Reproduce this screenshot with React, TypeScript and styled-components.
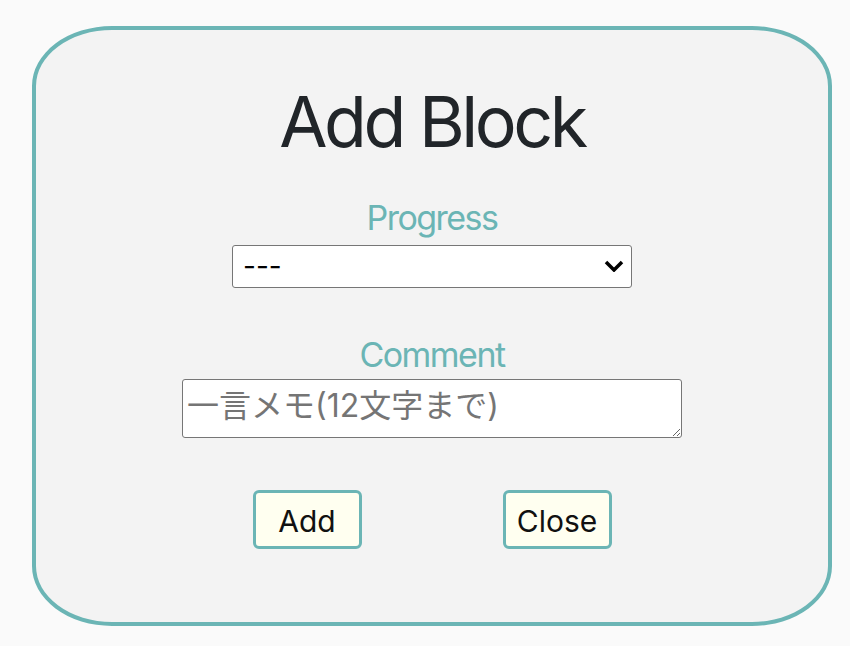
import React from "react";
import styled, { createGlobalStyle } from "styled-components";

const GlobalStyle = createGlobalStyle`
  body {
    margin: 0;
    background: #fafafa;
    font-family: Inter, "Noto Sans CJK JP", sans-serif;
  }
`;

const Modal = styled.div`
  box-sizing: border-box;
  width: 800px;
  height: 600px;
  margin: 26px 0 0 32px;
  padding-top: 57px;
  border: 4px solid #6bb5b5;
  border-radius: 10%;
  background: #f3f3f3;
  display: flex;
  flex-direction: column;
  align-items: center;
`;

const Title = styled.h1`
  margin: 0;
  font-size: 70px;
  font-weight: 400;
  line-height: 1;
  letter-spacing: -0.05em;
  color: #212529;
`;

const Label = styled.label<{ $top: number }>`
  margin-top: ${(p) => p.$top}px;
  font-size: 34px;
  line-height: 1.2;
  letter-spacing: -0.045em;
  color: #6bb5b5;
`;

const SelectWrap = styled.div`
  position: relative;
  margin-top: 6px;
`;

const Select = styled.select`
  box-sizing: border-box;
  width: 400px;
  height: 43px;
  padding: 0 10px;
  border: 1px solid #767676;
  border-radius: 3px;
  background: #fff;
  appearance: none;
  font-family: Inter, sans-serif;
  font-size: 28px;
  color: #000;
`;

const Chevron = styled.svg`
  position: absolute;
  right: 8px;
  top: 15px;
  pointer-events: none;
`;

const TextArea = styled.textarea`
  box-sizing: border-box;
  width: 500px;
  height: 59px;
  margin-top: 3px;
  padding: 7px 4px;
  border: 1px solid #767676;
  border-radius: 3px;
  background: #fff;
  font-family: Inter, "Noto Sans CJK JP", sans-serif;
  font-size: 32px;
  line-height: 1.2;
  &::placeholder {
    color: #757575;
  }
`;

const Buttons = styled.div`
  display: flex;
  gap: 141px;
  margin-top: 52px;
`;

const Button = styled.button`
  box-sizing: border-box;
  width: 109px;
  height: 59px;
  padding: 3px 0 0;
  border: 3px solid #6bb5b5;
  border-radius: 6px;
  background: #fffff0;
  font-family: Inter, sans-serif;
  font-size: 30px;
  color: #111;
`;

export default function App() {
  return (
    <>
      <GlobalStyle />
      <Modal>
        <Title>Add Block</Title>
        <Label $top={41}>Progress</Label>
        <SelectWrap>
          <Select defaultValue="">
            <option value="">---</option>
          </Select>
          <Chevron width="20" height="12" viewBox="0 0 20 12">
            <polyline
              points="2,2 10,10 18,2"
              fill="none"
              stroke="#000"
              strokeWidth="3.5"
            />
          </Chevron>
        </SelectWrap>
        <Label $top={47}>Comment</Label>
        <TextArea placeholder="一言メモ(12文字まで)" />
        <Buttons>
          <Button>Add</Button>
          <Button>Close</Button>
        </Buttons>
      </Modal>
    </>
  );
}
